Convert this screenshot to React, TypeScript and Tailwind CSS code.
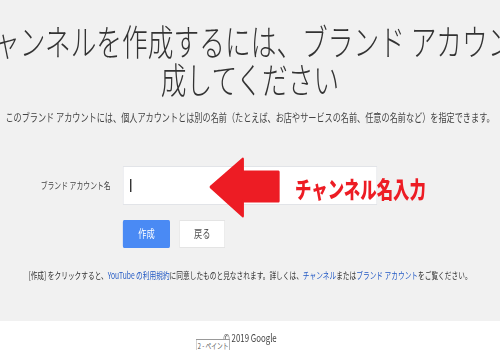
const jp = "font-['Noto_Sans_CJK_JP','Noto_Sans',sans-serif]";

function Arrow() {
  return (
    <svg className="absolute left-[290px] top-[-10px]" width="105" height="64" viewBox="0 0 105 64">
      <path
        d="M5 31 L50 3 L50 16 L100 16 L100 45 L50 45 L50 60 Z"
        fill="#ed1c24"
        stroke="#ed1c24"
        strokeWidth="3"
        strokeLinejoin="round"
      />
    </svg>
  );
}

export default function App() {
  return (
    <div className={`h-[350px] w-[500px] overflow-hidden bg-white ${jp}`}>
      <div className="w-[700px] origin-top-left scale-x-[0.7143]">
        <div className="flex h-[321px] flex-col bg-[#f1f1f1]">
          <div className="pt-[21px] text-[36px] font-light leading-[38px] text-[#333]">
            <div className="ml-[-44px] whitespace-nowrap">チャンネルを作成するには、ブランド アカウントを作</div>
            <div className="flex justify-center whitespace-nowrap">成してください</div>
          </div>

          <div className="mt-[12px] flex justify-center whitespace-nowrap text-[11.4px] leading-[16px] text-[#444]">
            このブランド アカウントには、個人アカウントとは別の名前（たとえば、お店やサービスの名前、任意の名前など）を指定できます。
          </div>

          <div className="relative mt-[41px] flex items-center">
            <div className="w-[172px] pr-[17px] text-right text-[9.6px] text-[#444]">ブランド アカウント名</div>
            <div className="flex h-[39px] w-[356px] items-center border border-[#e2e4e8] bg-white pl-[9px]">
              <div className="h-[13px] w-[1.5px] bg-[#333]" />
            </div>
            <Arrow />
            <div className="absolute left-[413px] top-[9px] whitespace-nowrap text-[23px] font-black leading-[26px] text-[#ed1c24]">
              チャンネル名入力
            </div>
          </div>

          <div className="mt-[15px] flex gap-[13px] pl-[172px]">
            <div className="flex h-[28px] w-[66px] items-center justify-center rounded-[2px] bg-[#4a8af4] text-[11.5px] text-white">
              作成
            </div>
            <div className="flex h-[28px] w-[64px] items-center justify-center border border-[#e4e4e4] bg-white text-[11.5px] text-[#555]">
              戻る
            </div>
          </div>

          <div className="mt-[20px] flex justify-center whitespace-nowrap text-[9.4px] leading-[14px] text-[#333]">
            [作成] をクリックすると、<span className="text-[#2158c4]">YouTube の利用規約</span>に同意したものと見なされます。詳しくは、
            <span className="text-[#2158c4]">チャンネル</span>または<span className="text-[#2158c4]">ブランド アカウント</span>をご覧ください。
          </div>
        </div>

        <div className="relative flex h-[29px] justify-center pt-[10px] text-[11px] leading-[12px] text-[#444]">
          © 2019 Google
          <div className="absolute left-[274px] top-[18px] h-[14px] w-[48px] border border-b-0 border-[#999] bg-white pl-[2px] text-[8px] leading-[12px] text-[#555]">
            2 - ペイント
          </div>
        </div>
      </div>
    </div>
  );
}
